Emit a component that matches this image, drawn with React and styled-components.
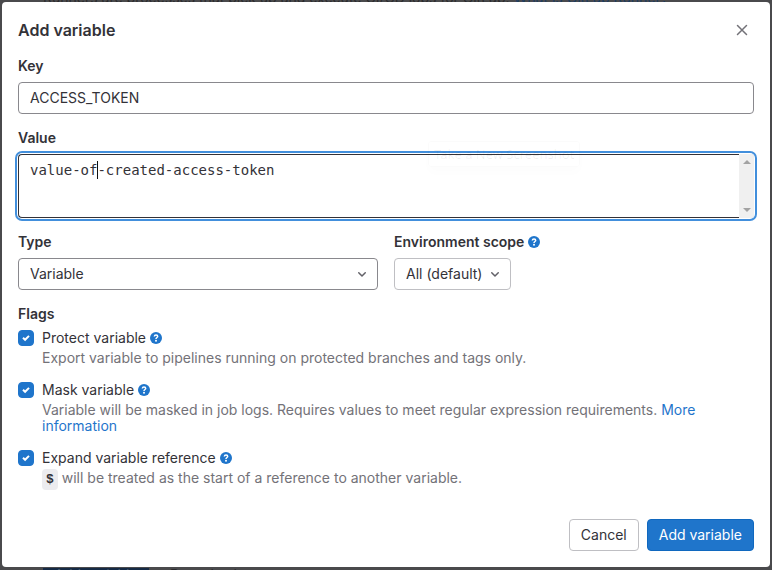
import React, { useState } from "react";
import styled, { createGlobalStyle, css } from "styled-components";

const GlobalStyle = createGlobalStyle`
  *, *::before, *::after { box-sizing: border-box; }
  body {
    margin: 0;
    background: #4a4a4c;
    color: #333238;
    font: 14px/16px Inter, "Noto Sans", sans-serif;
  }
  input, textarea, select, button { font: inherit; color: inherit; margin: 0; }
`;

const Screen = styled.div`
  position: relative;
  display: flex;
  min-height: 100vh;
  padding: 2px 2px 3px;
  overflow: hidden;
`;

const Behind = styled.div`
  position: absolute;
  inset: 0;
  display: flex;
  flex-direction: column;
  justify-content: space-between;
  overflow: hidden;
  color: #2a2a2d;
`;

const BehindText = styled.p`
  margin: -10px 0 0 43px;
  white-space: nowrap;
  a { color: #1c3d63; text-decoration: none; }
`;

const BehindTabs = styled.div`
  display: flex;
  gap: 21px;
  margin: 0 0 -12px 43px;
  span { line-height: 14px; }
  span:first-child { width: 106px; background: #152a45; color: #4a5a70; text-align: center; }
`;

const Modal = styled.section`
  position: relative;
  flex: 1;
  display: flex;
  flex-direction: column;
  padding: 16px;
  background: #fff;
  border-radius: 4px;
`;

const Header = styled.header`
  display: flex;
  align-items: center;
  justify-content: space-between;
  height: 24px;
  margin-bottom: 16px;
`;

const Title = styled.h2`
  margin: 0;
  font-size: 16px;
  line-height: 24px;
  font-weight: 600;
`;

const CloseButton = styled.button`
  display: flex;
  padding: 4px;
  border: 0;
  background: none;
  color: #737278;
`;

const Form = styled.form`
  flex: 1;
  display: flex;
  flex-direction: column;
  gap: 16px;
`;

const Field = styled.div`
  display: flex;
  flex-direction: column;
  align-items: ${(p) => (p.$fit ? "flex-start" : "stretch")};
  gap: 8px;
`;

const Columns = styled.div`
  display: grid;
  grid-template-columns: 1fr 1fr;
  gap: 16px;
`;

const LabelRow = styled.div`
  display: flex;
  align-items: center;
  gap: 4px;
  height: 16px;
`;

const labelText = css`
  font-size: 14px;
  line-height: 16px;
  font-weight: 600;
`;

const Label = styled.label`
  ${labelText}
`;

const TextInput = styled.input`
  width: 100%;
  height: 32px;
  padding: 0 11px 2px;
  border: 1px solid #89888d;
  border-radius: 4px;
  background: #fff;
  outline: 0;
`;

const ValueBox = styled.div`
  position: relative;
  display: flex;
  height: 64px;
  border-radius: 4px;
  box-shadow: 0 0 0 1px #fff, 0 0 0 3px #428fdc;
`;

const ValueArea = styled.textarea`
  flex: 1;
  min-width: 0;
  padding: 7px 11px;
  border: 1px solid #333238;
  border-right: 0;
  border-radius: 4px 0 0 4px;
  outline: 0;
  resize: none;
  overflow: hidden;
  background: #fff;
  caret-color: transparent;
  font: 14px/16px "DejaVu Sans Mono", monospace;
`;

const Caret = styled.span`
  position: absolute;
  top: 7px;
  left: 13px;
  width: 8ch;
  height: 18px;
  border-right: 1px solid #111;
  font: 14px/16px "DejaVu Sans Mono", monospace;
  pointer-events: none;
`;

const ScrollTrack = styled.div`
  display: flex;
  flex-direction: column;
  justify-content: space-between;
  align-items: center;
  width: 15px;
  padding: 6px 0;
  background: #f0f0f0;
  border-radius: 0 3px 3px 0;
`;

const SelectWrap = styled.div`
  display: grid;
  align-items: center;
  > * { grid-area: 1 / 1; }
  > svg { justify-self: end; margin-right: 8px; pointer-events: none; color: #626168; }
`;

const Select = styled.select`
  appearance: none;
  width: 100%;
  height: 32px;
  padding: 0 ${(p) => (p.$light ? 27 : 32)}px 0 11px;
  border: 1px solid ${(p) => (p.$light ? "#bfbfc3" : "#89888d")};
  border-radius: 4px;
  background: #fff;
  outline: 0;
`;

const Flags = styled.fieldset`
  display: flex;
  flex-direction: column;
  gap: 16px;
  min-width: 0;
  margin: 0;
  padding: 0;
  border: 0;
`;

const Legend = styled.legend`
  ${labelText}
  padding: 0;
  margin-bottom: 8px;
`;

const Flag = styled.div`
  display: grid;
  grid-template-columns: 16px 1fr;
  column-gap: 8px;
  row-gap: 4px;
`;

const CheckWrap = styled.span`
  display: grid;
  > * { grid-area: 1 / 1; }
  > svg { pointer-events: none; }
`;

const CheckBox = styled.input`
  appearance: none;
  width: 16px;
  height: 16px;
  border: 1px solid #89888d;
  border-radius: 4px;
  background: #fff;
  &:checked { background: #1f75cb; border-color: #1f75cb; }
`;

const Help = styled.p`
  grid-column: 2;
  margin: 0;
  color: #737278;
`;

const Link = styled.a`
  color: #1f75cb;
  text-decoration: none;
`;

const Code = styled.code`
  padding: 3px 4px;
  border-radius: 4px;
  background: #ececef;
  color: #333238;
  font: bold 13px/16px "Liberation Mono", monospace;
`;

const HelpButton = styled.button`
  display: flex;
  padding: 0;
  border: 0;
  background: none;
`;

const Footer = styled.footer`
  display: flex;
  justify-content: flex-end;
  gap: 8px;
`;

const Button = styled.button`
  height: 32px;
  padding: 0 11px;
  border: 1px solid ${(p) => (p.$primary ? "#1068bf" : "#bfbfc3")};
  border-radius: 4px;
  background: ${(p) => (p.$primary ? "#1f75cb" : "#fff")};
  color: ${(p) => (p.$primary ? "#fff" : "#333238")};
`;

const Ghost = styled.div`
  position: absolute;
  top: 139px;
  left: 426px;
  padding: 4px 5px;
  border-radius: 3px;
  border: 1px solid rgba(0, 0, 0, 0.015);
  box-shadow: 0 6px 10px rgba(0, 0, 0, 0.012);
  color: rgba(0, 0, 0, 0.065);
  font: 13px/16px "Noto Sans", sans-serif;
  white-space: nowrap;
  pointer-events: none;
`;

const CloseIcon = () => (
  <svg width="16" height="16" viewBox="0 0 16 16" fill="none" stroke="currentColor" strokeWidth="1.5" strokeLinecap="round" aria-hidden="true">
    <path d="M3.5 3.5l9 9M12.5 3.5l-9 9" />
  </svg>
);

const Chevron = () => (
  <svg width="16" height="16" viewBox="0 0 16 16" fill="none" stroke="currentColor" strokeWidth="1.5" strokeLinecap="round" strokeLinejoin="round" aria-hidden="true">
    <path d="M4.75 6.75L8 10l3.25-3.25" />
  </svg>
);

const Arrow = ({ down }) => (
  <svg width="8" height="4" viewBox="0 0 8 4" fill="#a3a3a3" aria-hidden="true">
    <path d={down ? "M0 0h8L4 4z" : "M0 4h8L4 0z"} />
  </svg>
);

const Tick = () => (
  <svg width="16" height="16" viewBox="0 0 16 16" fill="none" stroke="#fff" strokeWidth="2" aria-hidden="true">
    <path d="M5 7.8l2.1 2L11 5.9" />
  </svg>
);

const HelpIcon = ({ about }) => (
  <HelpButton type="button" aria-label={`Help: ${about}`}>
    <svg width="12" height="12" viewBox="0 0 12 12" fill="none" aria-hidden="true">
      <circle cx="6" cy="6" r="6" fill="#1f75cb" />
      <path d="M4.3 4.5C4.4 3.6 5.1 3.1 6 3.1s1.7.5 1.7 1.3c0 1.1-1.7 1.1-1.7 2.5" stroke="#fff" strokeWidth="1.5" />
      <circle cx="6" cy="8.8" r="1" fill="#fff" />
    </svg>
  </HelpButton>
);

function FlagItem({ id, label, children }) {
  const [on, setOn] = useState(true);
  return (
    <Flag>
      <CheckWrap>
        <CheckBox id={id} type="checkbox" checked={on} onChange={(e) => setOn(e.target.checked)} />
        {on && <Tick />}
      </CheckWrap>
      <LabelRow>
        <label htmlFor={id}>{label}</label>
        <HelpIcon about={label} />
      </LabelRow>
      <Help>{children}</Help>
    </Flag>
  );
}

export default function App() {
  return (
    <Screen>
      <GlobalStyle />
      <Behind aria-hidden="true">
        <BehindText>
          Runners are processes that pick up and execute CI/CD jobs for GitLab. <a href="#runner" tabIndex={-1}>What is GitLab Runner?</a>
        </BehindText>
        <BehindTabs>
          <span>Add variable</span>
          <span>Reveal values</span>
        </BehindTabs>
      </Behind>
      <Modal role="dialog" aria-labelledby="title">
        <Header>
          <Title id="title">Add variable</Title>
          <CloseButton type="button" aria-label="Close"><CloseIcon /></CloseButton>
        </Header>
        <Form onSubmit={(e) => e.preventDefault()}>
          <Field>
            <Label htmlFor="key">Key</Label>
            <TextInput id="key" defaultValue="ACCESS_TOKEN" />
          </Field>
          <Field>
            <Label htmlFor="value">Value</Label>
            <ValueBox>
              <ValueArea id="value" defaultValue="value-of-created-access-token" spellCheck={false} />
              <Caret />
              <ScrollTrack><Arrow /><Arrow down /></ScrollTrack>
            </ValueBox>
          </Field>
          <Columns>
            <Field>
              <Label htmlFor="type">Type</Label>
              <SelectWrap>
                <Select id="type"><option>Variable</option></Select>
                <Chevron />
              </SelectWrap>
            </Field>
            <Field $fit>
              <LabelRow>
                <Label htmlFor="scope">Environment scope</Label>
                <HelpIcon about="Environment scope" />
              </LabelRow>
              <SelectWrap>
                <Select id="scope" $light><option>All (default)</option></Select>
                <Chevron />
              </SelectWrap>
            </Field>
          </Columns>
          <Flags>
            <Legend>Flags</Legend>
            <FlagItem id="protect" label="Protect variable">
              Export variable to pipelines running on protected branches and tags only.
            </FlagItem>
            <FlagItem id="mask" label="Mask variable">
              Variable will be masked in job logs. Requires values to meet regular expression requirements.{" "}
              <Link href="#more">More information</Link>
            </FlagItem>
            <FlagItem id="expand" label="Expand variable reference">
              <Code>$</Code> will be treated as the start of a reference to another variable.
            </FlagItem>
          </Flags>
        </Form>
        <Footer>
          <Button type="button">Cancel</Button>
          <Button type="button" $primary>Add variable</Button>
        </Footer>
        <Ghost aria-hidden="true">Take a New Screenshot</Ghost>
      </Modal>
    </Screen>
  );
}
